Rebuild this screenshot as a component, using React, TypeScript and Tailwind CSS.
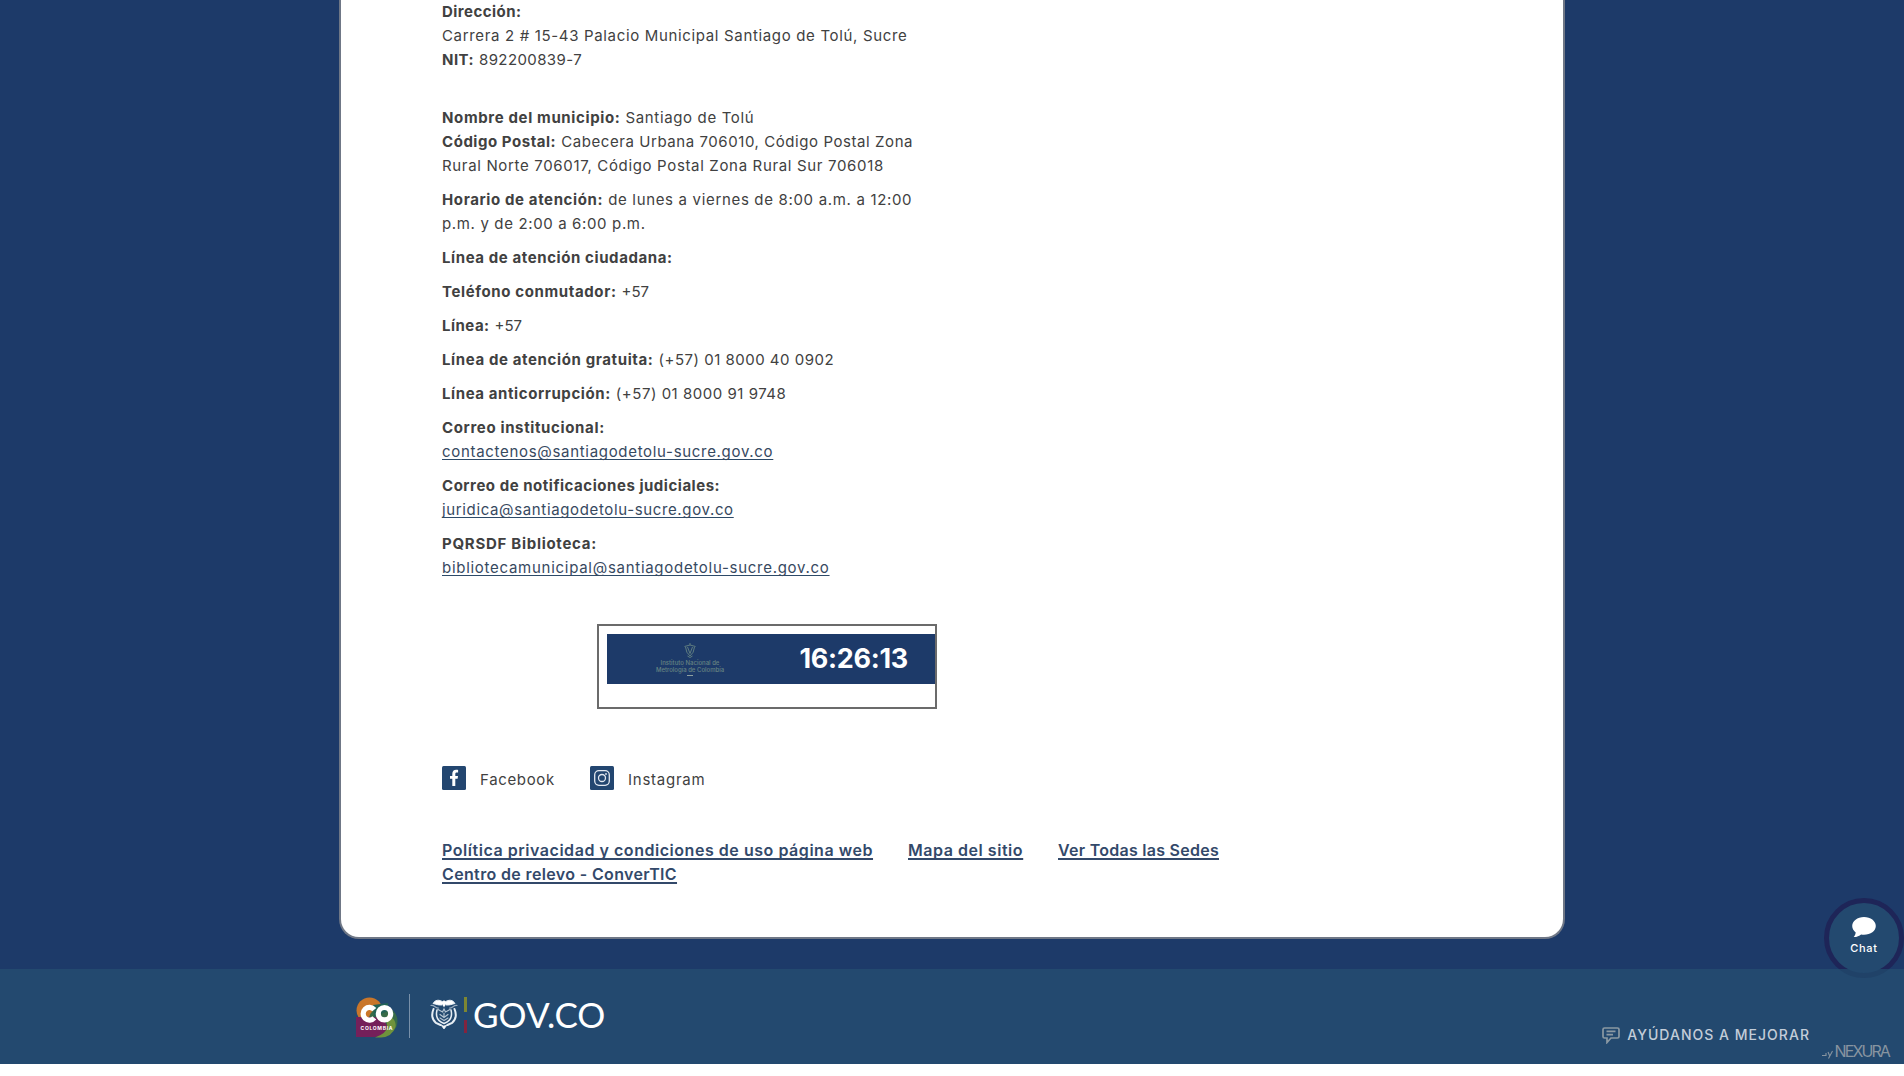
import type { ReactNode } from 'react'

type Piece = { text: string; className: string }

function Row({ label, value }: { label?: Piece; value?: Piece }) {
  return (
    <div className="flex h-6 gap-[5px] leading-6 whitespace-nowrap">
      {label && <strong className={'font-bold ' + label.className}>{label.text}</strong>}
      {value && <span className={value.className}>{value.text}</span>}
    </div>
  )
}

function Mail({ children, className }: { children: ReactNode; className: string }) {
  return (
    <div className="h-6 leading-6 whitespace-nowrap">
      <a
        href="#"
        className={
          'text-[#37495f] underline decoration-[#2d4a68] decoration-1 underline-offset-[2px] [text-decoration-skip-ink:none] ' +
          className
        }
      >
        {children}
      </a>
    </div>
  )
}

function ContactInfo() {
  return (
    <section className="flex flex-col gap-[10px] text-[15px] text-[#414141]">
      <div className="mb-6">
        <Row label={{ text: 'Dirección:', className: 'tracking-[0.46px]' }} />
        <Row value={{ text: 'Carrera 2 # 15-43 Palacio Municipal Santiago de Tolú, Sucre', className: 'tracking-[0.66px]' }} />
        <Row label={{ text: 'NIT:', className: 'tracking-[0.45px]' }} value={{ text: '892200839-7', className: 'tracking-[0.4px]' }} />
      </div>
      <div>
        <Row label={{ text: 'Nombre del municipio:', className: 'tracking-[0.64px]' }} value={{ text: 'Santiago de Tolú', className: 'tracking-[0.64px]' }} />
        <Row label={{ text: 'Código Postal:', className: 'tracking-[0.54px]' }} value={{ text: 'Cabecera Urbana 706010, Código Postal Zona', className: 'tracking-[0.57px]' }} />
        <Row value={{ text: 'Rural Norte 706017, Código Postal Zona Rural Sur 706018', className: 'tracking-[0.66px]' }} />
      </div>
      <div>
        <Row label={{ text: 'Horario de atención:', className: 'tracking-[0.62px]' }} value={{ text: 'de lunes a viernes de 8:00 a.m. a 12:00', className: 'tracking-[0.67px]' }} />
        <Row value={{ text: 'p.m. y de 2:00 a 6:00 p.m.', className: 'tracking-[0.64px]' }} />
      </div>
      <Row label={{ text: 'Línea de atención ciudadana:', className: 'tracking-[0.59px]' }} />
      <Row label={{ text: 'Teléfono conmutador:', className: 'tracking-[0.62px]' }} value={{ text: '+57', className: 'tracking-[0px]' }} />
      <Row label={{ text: 'Línea:', className: 'tracking-[0.48px]' }} value={{ text: '+57', className: 'tracking-[0px]' }} />
      <Row label={{ text: 'Línea de atención gratuita:', className: 'tracking-[0.62px]' }} value={{ text: '(+57) 01 8000 40 0902', className: 'tracking-[0.5px]' }} />
      <Row label={{ text: 'Línea anticorrupción:', className: 'tracking-[0.59px]' }} value={{ text: '(+57) 01 8000 91 9748', className: 'tracking-[0.52px]' }} />
      <div>
        <Row label={{ text: 'Correo institucional:', className: 'tracking-[0.64px]' }} />
        <Mail className="tracking-[0.69px]">contactenos@santiagodetolu-sucre.gov.co</Mail>
      </div>
      <div>
        <Row label={{ text: 'Correo de notificaciones judiciales:', className: 'tracking-[0.53px]' }} />
        <Mail className="tracking-[0.64px]">juridica@santiagodetolu-sucre.gov.co</Mail>
      </div>
      <div>
        <Row label={{ text: 'PQRSDF Biblioteca:', className: 'tracking-[0.72px]' }} />
        <Mail className="tracking-[0.72px]">bibliotecamunicipal@santiagodetolu-sucre.gov.co</Mail>
      </div>
    </section>
  )
}

function LegalClock() {
  return (
    <div className="mt-[44px] ml-[155px] h-[85px] w-[340px] border-2 border-[#6b6b6b] pt-2 pl-2">
      <div className="flex h-[50px] items-center justify-between bg-[#1d3a69] pr-[27px] pl-[49px]">
        <div className="flex w-[68px] flex-col items-center text-[#668482]">
          <svg width="16" height="17" viewBox="0 0 16 17" fill="none" stroke="currentColor" strokeWidth="0.9">
            <path d="M2.500 4.500 L8 3 L13.500 4.500 M3.500 5 Q4 11 8 14 Q12 11 12.500 5 M5.500 5 L8 11.500 L10.500 5 M8 1 V3 M5.500 14 L8 15.500 L10.500 14" />
          </svg>
          <span className="text-[6px] leading-[7px] font-medium whitespace-nowrap">Instituto Nacional de</span>
          <span className="text-[6px] leading-[7px] font-medium whitespace-nowrap">Metrología de Colombia</span>
          <span className="mt-[2px] h-px w-[6px] bg-[#8fa0a0]" />
        </div>
        <time className="text-[27px] leading-8 font-bold tracking-[-0.28px] text-white">16:26:13</time>
      </div>
    </div>
  )
}

function SocialLinks() {
  return (
    <div className="mt-[57px] flex h-6 items-center text-[15px] text-[#414141]">
      <a href="#" className="flex h-6 w-[148px] items-center gap-[14px]">
        <svg width="24" height="24" viewBox="0 0 24 24">
          <rect width="24" height="24" rx="1.500" fill="#234670" />
          <path d="M10.300 20v-7.300H8V10h2.300V8c0-2.700 1.400-4.200 3.900-4.200 1 0 1.500.1 1.900.2v2.500h-1.300c-1.200 0-1.500.6-1.500 1.600V10h2.700l-.4 2.700h-2.300V20z" fill="#fff" />
        </svg>
        <span className="pt-[5px] tracking-[0.65px]">Facebook</span>
      </a>
      <a href="#" className="flex h-6 items-center gap-[14px]">
        <svg width="24" height="24" viewBox="0 0 24 24" fill="none" stroke="#e3e8f0" strokeWidth="1.300">
          <rect width="24" height="24" rx="1.500" fill="#234670" stroke="none" />
          <rect x="4.700" y="4.700" width="14.600" height="14.600" rx="4.200" />
          <circle cx="12" cy="12" r="3.500" />
          <circle cx="16" cy="8" r="0.900" fill="#e3e8f0" stroke="none" />
        </svg>
        <span className="pt-[5px] tracking-[0.75px]">Instagram</span>
      </a>
    </div>
  )
}

function PolicyLinks() {
  return (
    <nav className="mt-[48px] flex flex-wrap gap-x-[35px] text-base leading-6 font-semibold whitespace-nowrap text-[#33496a] underline decoration-[#33496a] decoration-[1.500px] underline-offset-[2px] [text-decoration-skip-ink:none]">
      <a href="#" className="tracking-[0.54px]">Política privacidad y condiciones de uso página web</a>
      <a href="#" className="tracking-[0.54px]">Mapa del sitio</a>
      <a href="#" className="tracking-[0.26px]">Ver Todas las Sedes</a>
      <a href="#" className="tracking-[0.36px]">Centro de relevo - ConverTIC</a>
    </nav>
  )
}

function ColombiaLogo() {
  return (
    <svg width="42" height="42" viewBox="0 0 42 42">
      <circle cx="13.500" cy="13.500" r="13" fill="#c9762a" />
      <circle cx="27" cy="24" r="14.500" fill="#386b48" />
      <path d="M17 8 L32 6 L32 14 L18 20 Z" fill="#226356" />
      <path d="M0 20 H18 Q31 22 31 31 Q30 38 19 40 H0 Z" fill="#75205a" />
      <path d="M31 18 Q41 22 39.500 30 Q36 40 25 40.500 H19 Q31 36 31 30 Z" fill="#6f923c" />
      <path d="M18.300 12.700 A6.300 6.300 0 1 0 18.300 20.800" fill="none" stroke="#fff" strokeWidth="5.200" />
      <circle cx="28.500" cy="16.700" r="6.200" fill="none" stroke="#fff" strokeWidth="5.200" />
      <text x="4.500" y="33" fontSize="5" fontWeight="700" textLength="32" fill="#fff">COLOMBIA</text>
    </svg>
  )
}

function CoatOfArms() {
  return (
    <svg width="28" height="31" viewBox="0 0 28 31" fill="none" stroke="#e6edf3" strokeLinecap="round">
      <path d="M13 3 C9 0 5 1 3 4.500 C6 5 8 6.500 12 6 M15 3 C19 0 23 1 25 4.500 C22 5 20 6.500 16 6" fill="#fff" strokeWidth="1" />
      <path d="M14 1 L16.500 4 L14 8.500 L11.500 4Z" fill="#fff" stroke="none" />
      <path d="M1 6.500 C5 6 5 9.500 8.500 9 M27 6.500 C23 6 23 9.500 19.500 9" strokeWidth="1.200" opacity=".6" />
      <path d="M3.500 10 C1.500 15 2 20.500 6 24 L10.500 26 M24.500 10 C26.500 15 26 20.500 22 24 L17.500 26" strokeWidth="2" />
      <path d="M7 11 C5.500 17 7 22 14 24.500 C21 22 22.500 17 21 11" strokeWidth="1.500" />
      <path d="M8 10.500 L12.500 13 L14 10 L15.500 13 L20 10.500 M10 15.500 L14 18.500 L18 15.500 M10 19 L14 21.500 L18 19 M14 14 V17" strokeWidth="1.200" opacity=".75" />
      <path d="M11 26 L14 30 L17 26 L14 27Z" fill="#fff" strokeWidth=".8" />
    </svg>
  )
}

function GovFooter() {
  return (
    <footer className="flex h-[95px] items-start bg-[#23496f]">
      <div className="mt-[25px] ml-[356px] flex h-11 items-center">
        <span className="flex pt-[3px]">
          <ColombiaLogo />
        </span>
        <span className="ml-[11px] h-11 w-px bg-[#7890a9]" />
        <span className="ml-[20px] flex pb-1">
          <CoatOfArms />
        </span>
        <span className="mb-[2px] ml-[6px] flex h-9 w-[3px] flex-col">
          <span className="h-[15px] bg-[#7d8632]" />
          <span className="h-[8px] bg-[#1f4878]" />
          <span className="grow bg-[#81243f]" />
        </span>
        <span className="mb-1 ml-[6px] font-['Lato'] text-[35px] leading-[44px] text-white">GOV.CO</span>
      </div>
      <div className="mt-[56px] ml-auto flex items-center gap-[7px] text-[#c3cdd9]">
        <svg width="18" height="17" viewBox="0 0 18 17" fill="none" stroke="#8b99a3" strokeWidth="1.700">
          <path d="M2.500 1 H15.500 Q17 1 17 2.500 V9.500 Q17 11 15.500 11 H9 L5 15.500 V11 H2.500 Q1 11 1 9.500 V2.500 Q1 1 2.500 1Z M4.500 4.400 H13.500 M4.500 7.600 H11" />
        </svg>
        <span className="text-[14px] leading-5 font-medium tracking-[1.02px]">AYÚDANOS A MEJORAR</span>
      </div>
      <div className="mt-[74px] mr-[15px] ml-3 flex w-[67px] items-end justify-between text-[#8794a0]">
        <svg width="11" height="9" viewBox="0 0 11 9" fill="none" stroke="currentColor" strokeWidth="1.100">
          <path d="M0 5.500 H4 V3 M6 2 L7.500 5.500 M10.500 1 L6.500 8.500" />
        </svg>
        <span className="text-[16px] leading-4 tracking-[-1.9px]">NEXURA</span>
      </div>
    </footer>
  )
}

function ChatButton() {
  return (
    <button className="absolute top-[898px] right-0 flex h-20 w-20 flex-col items-center rounded-full border-[5px] border-[#1e2558] bg-[#23496f] pt-[14px] text-white">
      <svg width="24" height="21" viewBox="0 0 24 21" fill="#fff">
        <path d="M12 0C5.400 0 .2 4 .2 9c0 2.500 1.300 4.800 3.500 6.400-.2 1.900-.9 3.200-2 4.700 3 .1 5.700-1.400 7.400-2.700.9.200 1.900.300 2.900.300 6.600 0 11.800-3.900 11.800-8.800S18.600 0 12 0z" />
      </svg>
      <span className="mt-[3px] text-[11px] leading-[14px] font-medium tracking-[0.7px]">Chat</span>
    </button>
  )
}

export default function App() {
  return (
    <div className="relative h-[1076px] w-[1904px] overflow-hidden bg-white font-['Inter',sans-serif]">
      <div className="h-[969px] bg-[#1d3a69]">
        <main className="mx-auto h-[939px] w-[1226px] rounded-b-[20px] border-2 border-t-0 border-[#6f7786] bg-white pl-[101px]">
          <div className="w-[860px]">
            <ContactInfo />
            <LegalClock />
            <SocialLinks />
            <PolicyLinks />
          </div>
        </main>
      </div>
      <ChatButton />
      <div className="relative">
        <GovFooter />
      </div>
      <div className="absolute right-0 bottom-[98px] flex h-[9px] w-20 items-end justify-center overflow-hidden">
        <span className="h-20 w-20 shrink-0 rounded-full border-[5px] border-[#204268] bg-[#23496f]" />
      </div>
    </div>
  )
}
